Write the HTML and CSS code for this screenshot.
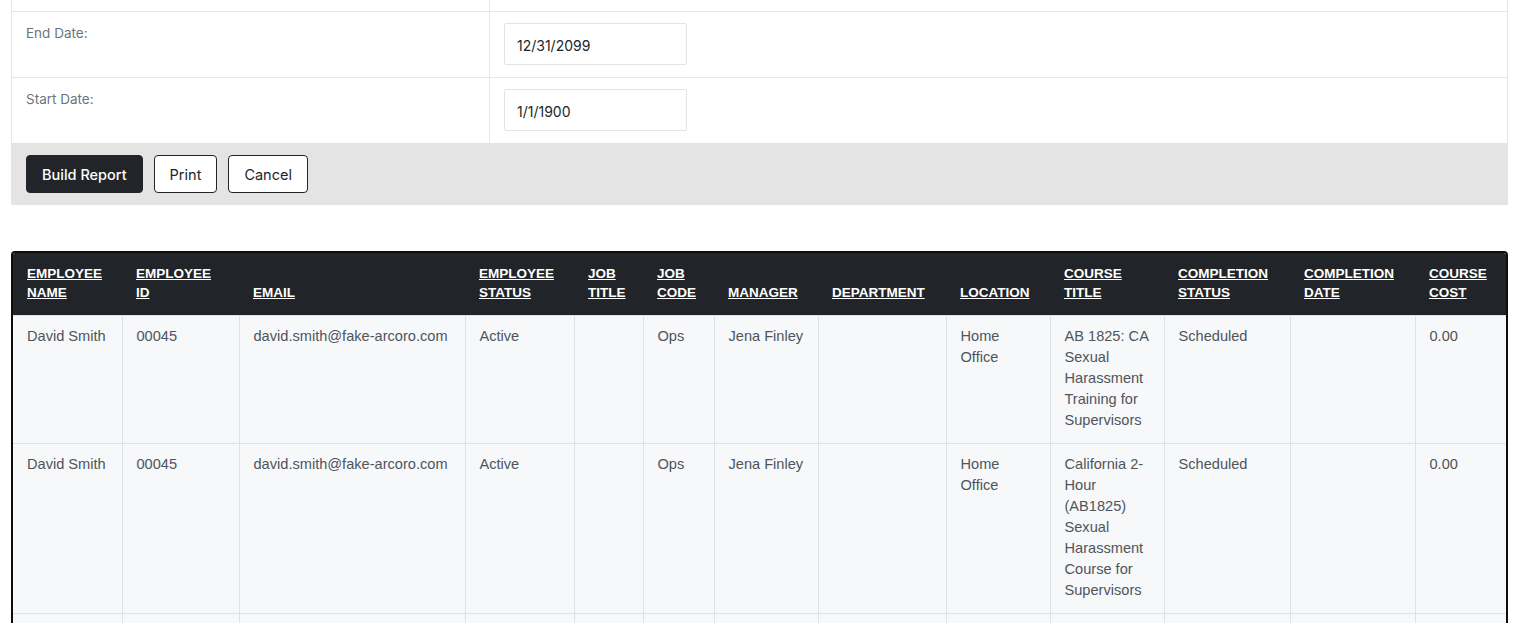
FILE: index.html
```html
<!DOCTYPE html>
<html lang="en">
<head>
    <meta charset="UTF-8">
    <meta name="viewport" content="width=device-width, initial-scale=1.0">
    <title>Training Report</title>
    <link rel="stylesheet" href="styles.css">
</head>
<body>
    <div class="report-form">
        <div class="field-row field-row-cut">
            <div class="field-label"></div>
            <div class="field-value"></div>
        </div>
        <div class="field-row">
            <div class="field-label">End Date:</div>
            <div class="field-value"><input class="date-input" type="text" value="12/31/2099"></div>
        </div>
        <div class="field-row">
            <div class="field-label">Start Date:</div>
            <div class="field-value"><input class="date-input" type="text" value="1/1/1900"></div>
        </div>
        <div class="form-actions">
            <button class="btn btn-dark">Build Report</button>
            <button class="btn btn-outline">Print</button>
            <button class="btn btn-outline">Cancel</button>
        </div>
    </div>

    <div class="report-table-wrap">
        <table class="report-table">
            <colgroup>
                <col style="width:109px">
                <col style="width:117px">
                <col style="width:226px">
                <col style="width:109px">
                <col style="width:69px">
                <col style="width:71px">
                <col style="width:104px">
                <col style="width:128px">
                <col style="width:104px">
                <col style="width:114px">
                <col style="width:126px">
                <col style="width:125px">
                <col style="width:91px">
            </colgroup>
            <thead>
                <tr>
                    <th><a href="#">Employee Name</a></th>
                    <th><a href="#">Employee ID</a></th>
                    <th><a href="#">Email</a></th>
                    <th><a href="#">Employee Status</a></th>
                    <th><a href="#">Job Title</a></th>
                    <th><a href="#">Job Code</a></th>
                    <th><a href="#">Manager</a></th>
                    <th><a href="#">Department</a></th>
                    <th><a href="#">Location</a></th>
                    <th><a href="#">Course Title</a></th>
                    <th><a href="#">Completion Status</a></th>
                    <th><a href="#">Completion Date</a></th>
                    <th><a href="#">Course Cost</a></th>
                </tr>
            </thead>
            <tbody>
                <tr>
                    <td>David Smith</td>
                    <td>00045</td>
                    <td>david.smith@fake-arcoro.com</td>
                    <td>Active</td>
                    <td></td>
                    <td>Ops</td>
                    <td>Jena Finley</td>
                    <td></td>
                    <td>Home Office</td>
                    <td>AB 1825: CA Sexual Harassment Training for Supervisors</td>
                    <td>Scheduled</td>
                    <td></td>
                    <td>0.00</td>
                </tr>
                <tr>
                    <td>David Smith</td>
                    <td>00045</td>
                    <td>david.smith@fake-arcoro.com</td>
                    <td>Active</td>
                    <td></td>
                    <td>Ops</td>
                    <td>Jena Finley</td>
                    <td></td>
                    <td>Home Office</td>
                    <td>California 2-Hour (AB1825) Sexual Harassment Course for Supervisors</td>
                    <td>Scheduled</td>
                    <td></td>
                    <td>0.00</td>
                </tr>
                <tr>
                    <td>David Smith</td>
                    <td>00045</td>
                    <td>david.smith@fake-arcoro.com</td>
                    <td>Active</td>
                    <td></td>
                    <td>Ops</td>
                    <td>Jena Finley</td>
                    <td></td>
                    <td>Home Office</td>
                    <td>Workplace Safety Basics</td>
                    <td>Scheduled</td>
                    <td></td>
                    <td>0.00</td>
                </tr>
            </tbody>
        </table>
    </div>
</body>
</html>
```

FILE: styles.css
```css
* {
    margin: 0;
    padding: 0;
    box-sizing: border-box;
}

body {
    font-family: 'Inter', 'Noto Sans', sans-serif;
    background-color: #fff;
    color: #212529;
    padding: 0 9px 40px 11px;
}

/* report filter form */

.report-form {
    border-left: 1px solid #e3e6ea;
    border-right: 1px solid #e3e6ea;
}

.field-row {
    display: grid;
    grid-template-columns: 478px 1fr;
    border-top: 1px solid #e3e6ea;
}

.field-row-cut {
    height: 11px;
    border-top: none;
}

.field-label {
    padding: 11px 14px;
    font-size: 13.5px;
    color: #6c757d;
    line-height: 20px;
    border-right: 1px solid #e3e6ea;
}

.field-value {
    padding: 11px 14px 12px;
}

.date-input {
    width: 183px;
    height: 42px;
    border: 1px solid #e1e4e8;
    border-radius: 2px;
    padding: 2px 12px 0;
    font-family: 'Inter', 'Noto Sans', sans-serif;
    font-size: 14px;
    color: #212529;
    background: #fff;
}

.form-actions {
    background-color: #e4e4e4;
    margin: 0 -1px;
    padding: 12px 15px;
    display: flex;
    gap: 11px;
}

.btn {
    height: 38px;
    padding: 0 15px;
    font-family: 'Inter', 'Noto Sans', sans-serif;
    font-size: 14.5px;
    border-radius: 4px;
    cursor: pointer;
}

.btn-dark {
    background: #212529;
    color: #fff;
    border: 1px solid #212529;
    font-weight: 500;
}

.btn-outline {
    background: #fff;
    color: #212529;
    border: 1px solid #212529;
}

/* report results table */

.report-table-wrap {
    margin-top: 46px;
    border: 2px solid #0c0d0e;
    border-radius: 4px 4px 0 0;
    overflow: hidden;
}

.report-table {
    width: 1493px;
    border-collapse: collapse;
    table-layout: fixed;
    font-family: 'Liberation Sans', Arial, sans-serif;
}

.report-table thead th {
    background-color: #212529;
    text-align: left;
    vertical-align: bottom;
    padding: 11px 14px 13px;
    font-size: 13.5px;
    line-height: 19px;
    text-transform: uppercase;
    border-bottom: 1px solid #dee2e6;
}

.report-table thead th a {
    color: #fff;
    text-decoration: underline;
}

.report-table tbody td {
    background-color: #f7f8fa;
    color: #4f555b;
    font-size: 14.6px;
    line-height: 21px;
    padding: 10px 12px 12px 14px;
    vertical-align: top;
    border: 1px solid #e0e3e6;
}

.report-table tbody td:first-child {
    border-left: none;
}

.report-table tbody td:last-child {
    border-right: none;
}
```
